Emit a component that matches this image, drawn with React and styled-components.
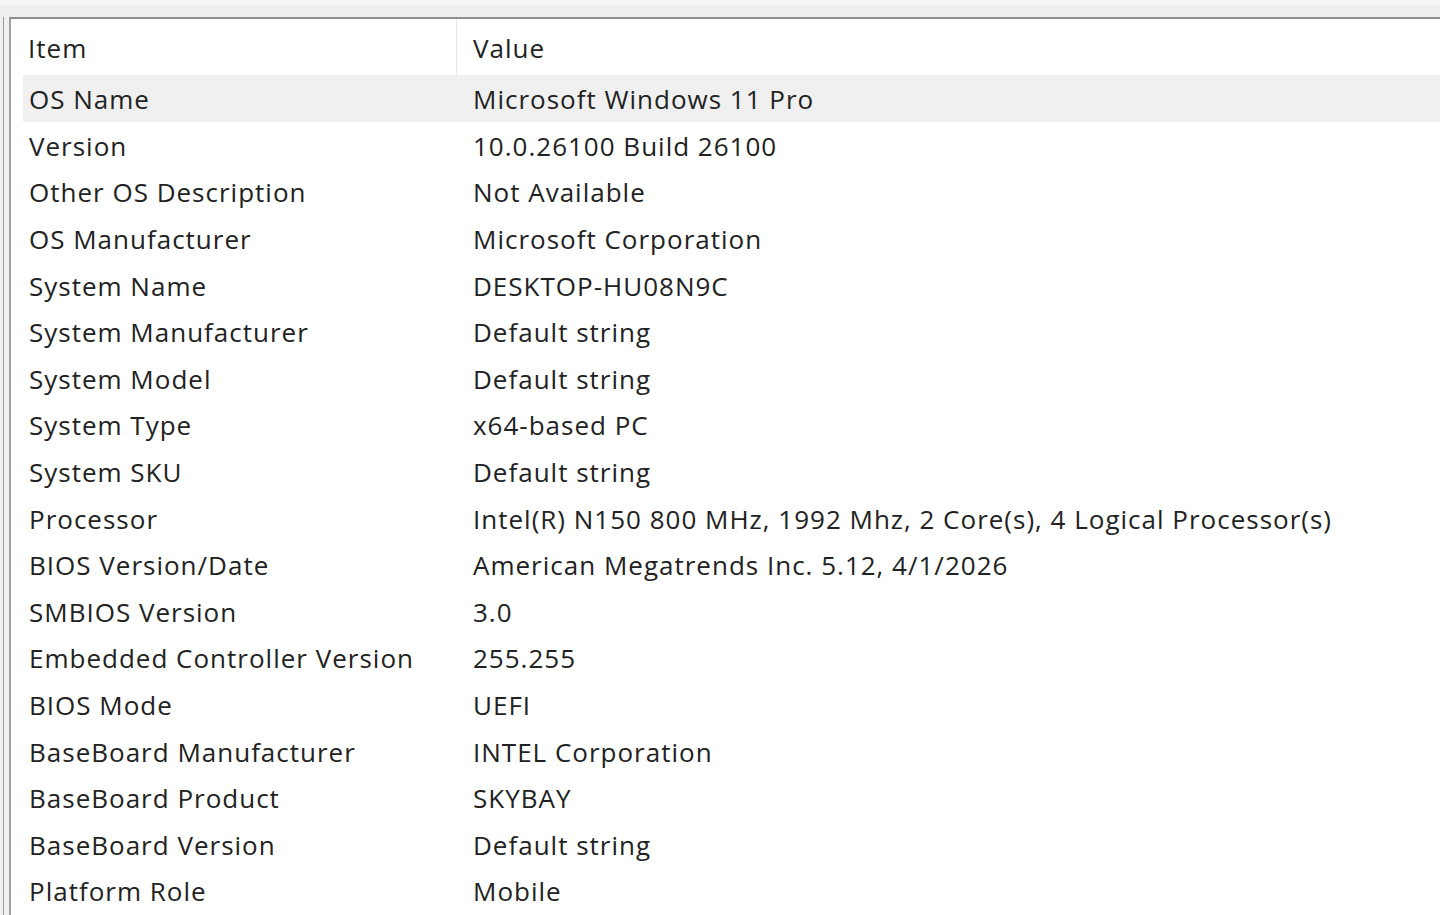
import React from 'react'
import styled, { createGlobalStyle } from 'styled-components'

const GlobalStyle = createGlobalStyle`
  html, body {
    margin: 0;
    padding: 0;
    background: #f0f0f0;
    overflow: hidden;
  }
  body {
    font-family: "Open Sans", "Noto Sans", "DejaVu Sans", sans-serif;
  }
`

const rows = [
  ['OS Name', 'Microsoft Windows 11 Pro'],
  ['Version', '10.0.26100 Build 26100'],
  ['Other OS Description', 'Not Available'],
  ['OS Manufacturer', 'Microsoft Corporation'],
  ['System Name', 'DESKTOP-HU08N9C'],
  ['System Manufacturer', 'Default string'],
  ['System Model', 'Default string'],
  ['System Type', 'x64-based PC'],
  ['System SKU', 'Default string'],
  ['Processor', 'Intel(R) N150 800 MHz, 1992 Mhz, 2 Core(s), 4 Logical Processor(s)'],
  ['BIOS Version/Date', 'American Megatrends Inc. 5.12, 4/1/2026'],
  ['SMBIOS Version', '3.0'],
  ['Embedded Controller Version', '255.255'],
  ['BIOS Mode', 'UEFI'],
  ['BaseBoard Manufacturer', 'INTEL Corporation'],
  ['BaseBoard Product', 'SKYBAY'],
  ['BaseBoard Version', 'Default string'],
  ['Platform Role', 'Mobile'],
]

const Window = styled.div`
  width: 1440px;
  height: 915px;
  display: flex;
  flex-direction: column;
  background: #f0f0f0;
`

const TopStrip = styled.div`
  height: 17px;
  flex: none;
  background: linear-gradient(#f6f6f6 0, #f6f6f6 5px, #eeeff0 5px, #eeeff0 100%);
`

const Body = styled.div`
  flex: 1;
  display: flex;
  min-height: 0;
`

const Splitter = styled.div`
  width: 3px;
  flex: none;
  background: #f0f0f0;
  border-right: 1.5px solid #9a9a9a;
  margin-right: 5px;
`

const ListView = styled.div`
  flex: 1;
  min-width: 0;
  background: #ffffff;
  border-top: 2px solid #8e8e8e;
  border-left: 2px solid #a0a0a0;
  display: flex;
  flex-direction: column;
`

const Grid = styled.div`
  display: grid;
  grid-template-columns: 446px 1fr;
`

const HeaderCell = styled.div`
  height: 56px;
  display: flex;
  align-items: center;
  padding-left: ${(p) => p.$pad}px;
  padding-top: 2px;
  box-sizing: border-box;
  font-size: 26px;
  letter-spacing: 1px;
  color: #222222;
  border-right: ${(p) => (p.$divider ? '1.5px solid #e6e6e6' : 'none')};
`

const Row = styled.div`
  display: grid;
  grid-template-columns: 434px 1fr;
  grid-column: 1 / -1;
  margin-left: 12px;
  height: 46.6px;
  align-items: center;
  background: ${(p) => (p.$selected ? '#f0f0f0' : 'transparent')};
`

const Cell = styled.div`
  padding-left: ${(p) => p.$pad}px;
  padding-top: 2px;
  font-size: 26px;
  letter-spacing: 1px;
  color: #222222;
  white-space: nowrap;
`

export default function App() {
  return (
    <>
      <GlobalStyle />
      <Window>
        <TopStrip />
        <Body>
          <Splitter />
          <ListView>
            <Grid>
              <HeaderCell $pad={17} $divider>
                Item
              </HeaderCell>
              <HeaderCell $pad={16}>Value</HeaderCell>
              {rows.map(([item, value], i) => (
                <Row key={item} $selected={i === 0}>
                  <Cell $pad={6}>{item}</Cell>
                  <Cell $pad={16}>{value}</Cell>
                </Row>
              ))}
            </Grid>
          </ListView>
        </Body>
      </Window>
    </>
  )
}
